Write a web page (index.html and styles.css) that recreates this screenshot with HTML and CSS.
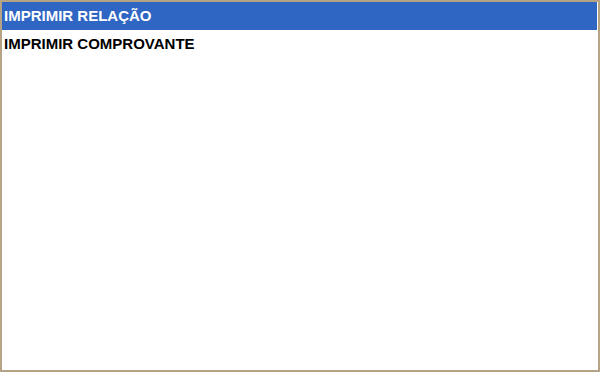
FILE: index.html
```html
<!DOCTYPE html>
<html lang="pt-BR">
<head>
    <meta charset="UTF-8">
    <title>Imprimir</title>
    <link rel="stylesheet" href="styles.css">
</head>
<body>
    <div class="menu">
        <div class="item selected">IMPRIMIR RELAÇÃO</div>
        <div class="item">IMPRIMIR COMPROVANTE</div>
    </div>
</body>
</html>
```

FILE: styles.css
```css
html, body {
    margin: 0;
    height: 100%;
}
body {
    font-family: 'Liberation Sans', Arial, sans-serif;
    background: #fff;
}
.menu {
    box-sizing: border-box;
    height: 372px;
    width: 600px;
    border: 2px solid #b6a386;
    padding: 0 1px 0 0;
}
.item {
    height: 28px;
    line-height: 28px;
    padding-left: 2px;
    font-size: 15px;
    font-weight: bold;
    color: #000;
}
.item.selected {
    background: #2f66c3;
    color: #fff;
}
```
